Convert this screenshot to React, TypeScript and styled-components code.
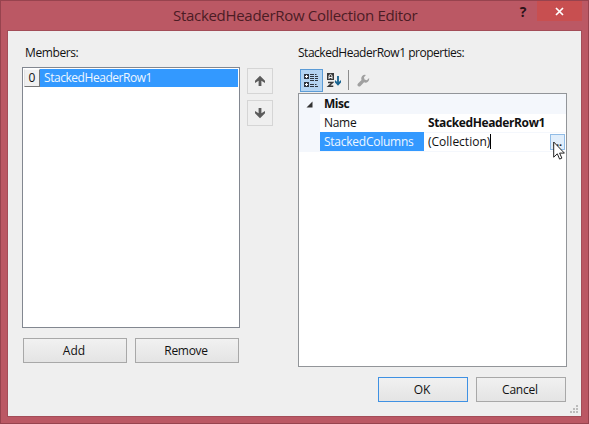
import React from "react";
import styled, { createGlobalStyle } from "styled-components";

const GlobalStyle = createGlobalStyle`
  * { box-sizing: border-box; }
  html, body { margin: 0; padding: 0; overflow: hidden; }
  body { font-family: "Open Sans", "Noto Sans", sans-serif; font-size: 12px; color: #111; }
`;

const Window = styled.div`
  width: 589px;
  height: 424px;
  display: flex;
  flex-direction: column;
  background: #bb5864;
  border: 1px solid #97434e;
  padding: 0 7px 7px;
`;

const TitleBar = styled.header`
  position: relative;
  height: 30px;
  flex: none;
  display: flex;
  justify-content: flex-end;
  align-items: flex-start;
  margin-right: -1px;
`;

const Title = styled.h1`
  position: absolute;
  left: 165px;
  top: 2px;
  margin: 0;
  font-size: 15px;
  line-height: 24px;
  font-weight: 400;
  letter-spacing: -0.3px;
  white-space: nowrap;
  color: #4b1c24;
`;

const HelpButton = styled.button`
  width: 28px;
  height: 20px;
  padding: 0;
  border: 0;
  background: none;
  font: 700 14px/21px "Open Sans", sans-serif;
  color: #2c1218;
`;

const CloseButton = styled.button`
  width: 45px;
  height: 20px;
  padding: 0;
  border: 0;
  display: grid;
  place-items: center;
  background: #c84f50;
`;

const Client = styled.main`
  position: relative;
  flex: 1;
  padding: 12px 15px 0 14px;
  background: #efefef;
  border: 1px solid #a34d58;
  margin: -1px;
  display: flex;
  flex-direction: column;
`;

const Panels = styled.div`
  display: grid;
  grid-template-columns: 218px 26px 269px;
  column-gap: 7px;
  height: 324px;
`;

const Column = styled.section<{ $offset?: number }>`
  display: flex;
  flex-direction: column;
  margin-left: ${(p) => p.$offset ?? 0}px;
  width: 100%;
`;

const Text = styled.span<{ $spacing?: number; $bold?: boolean }>`
  white-space: nowrap;
  letter-spacing: ${(p) => p.$spacing ?? 0}px;
  font-weight: ${(p) => (p.$bold ? 700 : 400)};
`;

const Label = styled.div<{ $indent?: number }>`
  height: 24px;
  flex: none;
  line-height: 18px;
  padding-top: 1px;
  padding-left: ${(p) => p.$indent ?? 0}px;
`;

const MemberList = styled.div`
  height: 261px;
  background: #fff;
  border: 1px solid #828790;
  padding: 1px;
`;

const MemberRow = styled.div`
  display: flex;
  height: 18px;
  line-height: 17px;
`;

const MemberIndex = styled.span`
  width: 16px;
  text-align: center;
  background: #f0f0f0;
  border: 1px solid;
  border-color: #fafafa #777 #777 #e3e3e3;
  line-height: 16px;
`;

const MemberName = styled.span`
  flex: 1;
  padding-left: 4px;
  color: #eef7ff;
  background: #3399ff;
  line-height: 18px;
`;

const ListActions = styled.div`
  display: flex;
  gap: 8px;
  padding: 10px 1px 0;
`;

const Button = styled.button<{ $primary?: boolean; $width: number }>`
  width: ${(p) => p.$width}px;
  height: 25px;
  padding: 0 2px 0 0;
  font: inherit;
  line-height: 23px;
  color: #111;
  background: linear-gradient(#f1f1f1, #e4e4e4);
  border: 1px solid ${(p) => (p.$primary ? "#3f91e3" : "#a8a8a8")};
`;

const MoveButtons = styled.div`
  display: flex;
  flex-direction: column;
  gap: 6px;
  padding-top: 25px;
`;

const MoveButton = styled.button`
  width: 26px;
  height: 26px;
  padding: 0;
  display: grid;
  place-items: center;
  background: #efefef;
  border: 1px solid #d5d5d5;
`;

const Toolbar = styled.div`
  display: flex;
  align-items: center;
  height: 26px;
  flex: none;
  padding: 1px 2px;
`;

const Tool = styled.span<{ $active?: boolean; $width?: number }>`
  width: ${(p) => p.$width ?? 23}px;
  height: 23px;
  display: grid;
  place-items: center;
  background: ${(p) => (p.$active ? "#b5d5f2" : "transparent")};
  border: 1px solid ${(p) => (p.$active ? "#5b9bd6" : "transparent")};
`;

const Separator = styled.span`
  width: 1px;
  height: 20px;
  margin: 0 6px 0 2px;
  background: #8c8c8c;
`;

const PropertyGrid = styled.div`
  height: 274px;
  background: #fff;
  border: 1px solid #929599;
`;

const GridRow = styled.div<{ $category?: boolean }>`
  display: grid;
  grid-template-columns: 21px 104px 1fr;
  height: 19px;
  line-height: 19px;
  background: ${(p) => (p.$category ? "#f4f7fc" : "#fff")};
`;

const Gutter = styled.span`
  background: #f4f7fc;
  display: grid;
  place-items: center;
`;

const Cell = styled.span<{ $selected?: boolean }>`
  padding-left: 4px;
  display: flex;
  align-items: center;
  color: ${(p) => (p.$selected ? "#eef7ff" : "#111")};
  background: ${(p) => (p.$selected ? "#3399ff" : "transparent")};
  background-clip: padding-box;
  border-bottom: 1px solid #f4f7fc;
`;

const Caret = styled.span`
  width: 1px;
  height: 15px;
  background: #000;
`;

const Ellipsis = styled.button`
  width: 15px;
  height: 16px;
  margin: 1px 1px 0 auto;
  padding: 0;
  border: 1px solid #91bce6;
  background: #e1eefb;
  font: 700 11px/10px "Open Sans", sans-serif;
  color: #222;
`;

const DialogActions = styled.footer`
  display: flex;
  justify-content: flex-end;
  gap: 8px;
  padding-top: 10px;
`;

const Grip = styled.svg`
  position: absolute;
  right: 2px;
  bottom: 2px;
`;

const Pointer = styled.svg`
  position: absolute;
  left: 545px;
  top: 110px;
`;

const CloseIcon = () => (
  <svg width="9" height="9" viewBox="0 0 9 9">
    <path d="M1 1l7 7M8 1L1 8" stroke="#fff" strokeWidth="1.7" />
  </svg>
);

const ArrowIcon = ({ down }: { down?: boolean }) => (
  <svg width="12" height="12" viewBox="0 0 12 12">
    <path
      transform={down ? "rotate(180 6 6)" : undefined}
      d="M6 .8L11 5.8v2.1L7.4 5.7V11H4.6V5.7L1 7.9V5.8z"
      fill="#5b5b5b"
    />
  </svg>
);

const CategorizedIcon = () => (
  <svg width="17" height="17" viewBox="0 0 17 17" fill="none">
    <path d="M1 2h5v5H1zM1 10h5v5H1z" fill="#303740" />
    <path d="M2 4.5h3M3.5 3v3M2 12.5h3M3.5 11v3" stroke="#fff" />
    <path
      d="M7 2.5h4M12 2.5h1.5M7 4.5h4M12 4.5h3M7 6.5h4M12 6.5h3M7 8.5h4M12 8.5h3M7 12.5h4M12 12.5h1.5M7 14.5h4M12 14.5h3"
      stroke="#303740"
    />
  </svg>
);

const SortIcon = () => (
  <svg width="17" height="17" viewBox="0 0 17 17" fill="none">
    <path d="M1 1h7v7H1z" fill="#383838" />
    <path d="M3 7V3.6L4.5 2.4L6 3.6V7M3 5.5h3" stroke="#f5f5f5" />
    <path d="M2 10.5h4.6L2.5 14.3h4.8" stroke="#383838" strokeWidth="1.5" />
    <path d="M12 4v7" stroke="#17628f" strokeWidth="1.8" />
    <path d="M9 8l3 2.8L15 8v2.6l-3 3.1-3-3.1z" fill="#17628f" />
  </svg>
);

const WrenchIcon = () => (
  <svg width="13" height="13" viewBox="0 0 14 14">
    <path
      d="M9.6 1a4 4 0 0 0-4.7 5.4L1.1 10.2a1.9 1.9 0 0 0 2.7 2.7L7.6 9a4 4 0 0 0 5.4-4.6l-2.4 2.2-2.5-.6-.6-2.5z"
      fill="#a0a0a0"
    />
  </svg>
);

export default function App() {
  return (
    <>
      <GlobalStyle />
      <Window>
        <TitleBar>
          <Title>StackedHeaderRow Collection Editor</Title>
          <HelpButton>?</HelpButton>
          <CloseButton aria-label="Close"><CloseIcon /></CloseButton>
        </TitleBar>
        <Client>
          <Panels>
            <Column>
              <Label $indent={3}><Text $spacing={-0.4}>Members:</Text></Label>
              <MemberList>
                <MemberRow>
                  <MemberIndex>0</MemberIndex>
                  <MemberName><Text $spacing={-0.45}>StackedHeaderRow1</Text></MemberName>
                </MemberRow>
              </MemberList>
              <ListActions>
                <Button $width={104}>Add</Button>
                <Button $width={104}><Text $spacing={-0.3}>Remove</Text></Button>
              </ListActions>
            </Column>
            <MoveButtons>
              <MoveButton aria-label="Move up"><ArrowIcon /></MoveButton>
              <MoveButton aria-label="Move down"><ArrowIcon down /></MoveButton>
            </MoveButtons>
            <Column $offset={18}>
              <Label><Text $spacing={-0.48}>StackedHeaderRow1 properties:</Text></Label>
              <Toolbar>
                <Tool $active><CategorizedIcon /></Tool>
                <Tool><SortIcon /></Tool>
                <Separator />
                <Tool $width={17}><WrenchIcon /></Tool>
              </Toolbar>
              <PropertyGrid>
                <GridRow $category>
                  <Gutter><svg width="7" height="7" viewBox="0 0 7 7"><path d="M6.5 .5v6h-6z" fill="#333" /></svg></Gutter>
                  <Cell><Text $bold $spacing={-0.45}>Misc</Text></Cell>
                  <Cell />
                </GridRow>
                <GridRow>
                  <Gutter />
                  <Cell><Text $spacing={-0.3}>Name</Text></Cell>
                  <Cell><Text $bold $spacing={-0.38}>StackedHeaderRow1</Text></Cell>
                </GridRow>
                <GridRow>
                  <Gutter />
                  <Cell $selected><Text $spacing={-0.25}>StackedColumns</Text></Cell>
                  <Cell><Text>(Collection)</Text><Caret /><Ellipsis>...</Ellipsis></Cell>
                </GridRow>
              </PropertyGrid>
            </Column>
          </Panels>
          <DialogActions>
            <Button $width={90} $primary>OK</Button>
            <Button $width={90}><Text $spacing={-0.2}>Cancel</Text></Button>
          </DialogActions>
          <Grip width="9" height="9" viewBox="0 0 9 9" fill="#bcbcbc">
            <path d="M6 0h2v2H6zM3 3h2v2H3zM6 3h2v2H6zM0 6h2v2H0zM3 6h2v2H3zM6 6h2v2H6z" />
          </Grip>
          <Pointer width="13" height="20" viewBox="0 0 13 20">
            <path d="M.7 1v15.2l3.6-3.4 2.3 5.3 2.3-1-2.3-5h4.8z" fill="#fff" stroke="#222" strokeWidth="1" />
          </Pointer>
        </Client>
      </Window>
    </>
  );
}
